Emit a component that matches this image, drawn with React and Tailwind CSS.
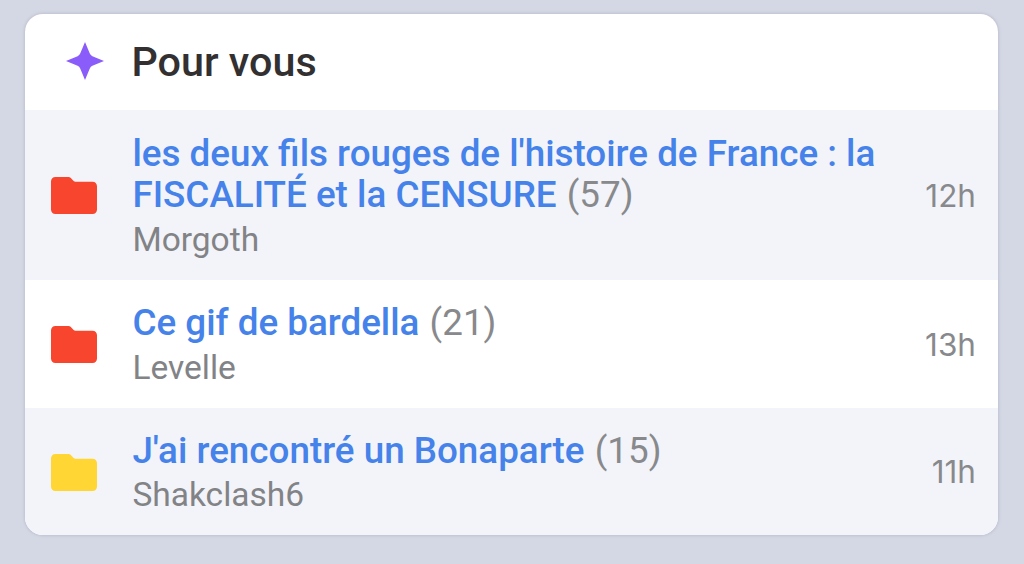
const topics = [
  {
    title: "les deux fils rouges de l'histoire de France : la FISCALITÉ et la CENSURE",
    count: 57,
    author: "Morgoth",
    age: "12h",
    folder: "text-[#f8452d]",
    row: "h-[170px] bg-[#f3f4f9]",
  },
  {
    title: "Ce gif de bardella",
    count: 21,
    author: "Levelle",
    age: "13h",
    folder: "text-[#f8452d]",
    row: "h-[128px] bg-white",
  },
  {
    title: "J'ai rencontré un Bonaparte",
    count: 15,
    author: "Shakclash6",
    age: "11h",
    folder: "text-[#ffd633]",
    row: "h-[127px] bg-[#f3f4f9]",
  },
];

function SparkIcon() {
  return (
    <svg className="-mt-[2px] h-[38px] w-[38px] shrink-0" viewBox="0 0 38 38" fill="#8a5cf9" aria-hidden="true">
      <path d="M19 0L23.800 11.600Q24.600 13.400 26.400 14.200L38 19L26.400 23.800Q24.600 24.600 23.800 26.400L19 38L14.200 26.400Q13.400 24.600 11.600 23.800L0 19L11.600 14.200Q13.400 13.400 14.200 11.600Z" />
    </svg>
  );
}

function FolderIcon({ className }) {
  return (
    <svg className={`h-[37px] w-[46px] shrink-0 ${className}`} viewBox="0 0 46 37" fill="currentColor" aria-hidden="true">
      <path d="M4.500 0H17c1.200 0 2 .3 2.800 1.100l2.600 2.600c.8.800 1.500 1.100 2.700 1.100h16.400C44.200 4.800 46 6.600 46 9.300v23.200c0 2.700-1.800 4.500-4.500 4.500h-37C1.800 37 0 35.200 0 32.500v-28C0 1.800 1.800 0 4.500 0z" />
    </svg>
  );
}

function TopicRow({ topic }) {
  return (
    <li className={`flex items-center pt-px pl-[26.4px] pr-[22px] ${topic.row}`}>
      <FolderIcon className={topic.folder} />
      <div className="ml-[35px] w-[760px] pt-px">
        <h3 className="text-[36.8px] leading-[41.5px] font-medium text-[#4582ea]">
          {topic.title} <span className="ml-px font-normal text-[#88898c]">{`(${topic.count})`}</span>
        </h3>
        <p className="mt-[3px] text-[33.5px] leading-[41px] text-[#828386]">{topic.author}</p>
      </div>
      <span className="ml-auto font-['Inter'] text-[31.5px] font-normal text-[#88898c]">{topic.age}</span>
    </li>
  );
}

export default function App() {
  return (
    <main className="h-[564px] bg-[#d4d8e4] pt-[14px] pr-[26px] pl-[25px] font-['Roboto',sans-serif]">
      <section className="overflow-hidden rounded-[18px] bg-white shadow-[0_0_3px_1px_#bfc1cf]">
        <header className="flex h-[96px] items-center pl-[41px]">
          <SparkIcon />
          <h2 className="mt-[2px] ml-[27.5px] text-[41.3px] font-medium text-[#333031]">Pour vous</h2>
        </header>
        <ul>
          {topics.map((topic) => (
            <TopicRow key={topic.author} topic={topic} />
          ))}
        </ul>
      </section>
    </main>
  );
}
